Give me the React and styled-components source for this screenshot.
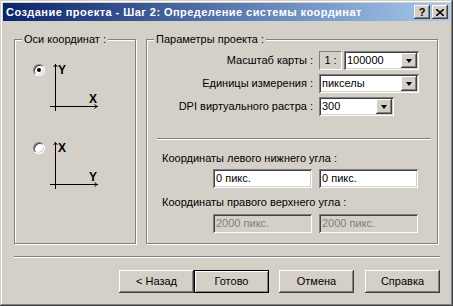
import React from 'react';
import styled, { createGlobalStyle } from 'styled-components';

const GlobalStyle = createGlobalStyle`
  html, body {
    margin: 0;
    padding: 0;
    background: #d4d0c8;
  }
  body {
    font-family: "Liberation Sans", Arial, sans-serif;
    font-size: 11px;
    line-height: 13px;
    color: #000;
  }
`;

const raised = `
  box-shadow: inset -1px -1px #404040, inset 1px 1px #fff,
    inset -2px -2px #808080, inset 2px 2px #d4d0c8;
`;

const sunken = `
  box-shadow: inset 1px 1px #808080, inset -1px -1px #fff,
    inset 2px 2px #404040, inset -2px -2px #d4d0c8;
`;

const Window = styled.div`
  width: 453px;
  height: 306px;
  box-sizing: border-box;
  padding: 3px;
  background: #d4d0c8;
  box-shadow: inset -1px -1px #404040, inset 1px 1px #d4d0c8,
    inset -2px -2px #808080, inset 2px 2px #fff;
  display: flex;
  flex-direction: column;
`;

const TitleBar = styled.div`
  height: 18px;
  display: flex;
  align-items: center;
  padding: 0 2px 0 3px;
  background: linear-gradient(to right, #0a246a, #a6caf0);
`;

const Title = styled.div`
  flex: 1;
  color: #fff;
  font-weight: bold;
  font-size: 11px;
  letter-spacing: 0.45px;
  white-space: nowrap;
`;

const CaptionButton = styled.div`
  width: 16px;
  height: 14px;
  margin-left: 2px;
  background: #d4d0c8;
  ${raised}
  display: flex;
  align-items: center;
  justify-content: center;
  font-weight: bold;
  font-size: 11px;
`;

const Body = styled.div`
  flex: 1;
  padding: 18px 0 0 11px;
  display: flex;
  flex-direction: column;
`;

const Groups = styled.div`
  display: flex;
  gap: 10px;
`;

const GroupBox = styled.div`
  position: relative;
  box-sizing: border-box;
  width: ${p => p.$w}px;
  height: 205px;
  border: 1px solid #808080;
  box-shadow: inset 1px 1px #fff, 1px 1px #fff;
  display: flex;
  flex-direction: column;
  padding: ${p => p.$pad};
`;

const Legend = styled.span`
  position: absolute;
  top: -7px;
  left: 7px;
  padding: 0 2px;
  background: #d4d0c8;
  white-space: nowrap;
`;

const AxisOption = styled.div`
  display: flex;
  align-items: flex-start;
  gap: 3px;
  height: 48px;
  & + & {
    margin-top: 30px;
  }
  svg {
    overflow: visible;
  }
`;

const Radio = styled.span`
  position: relative;
  width: 12px;
  height: 12px;
  box-sizing: border-box;
  border-radius: 50%;
  background: #fff;
  border: 1px solid;
  border-color: #808080 #fff #fff #808080;
  box-shadow: inset 1px 1px #404040, inset -1px -1px #d4d0c8;
  &::after {
    content: '';
    display: ${p => (p.$checked ? 'block' : 'none')};
    position: absolute;
    left: 3px;
    top: 3px;
    width: 4px;
    height: 4px;
    border-radius: 50%;
    background: #000;
  }
`;

const FormRow = styled.div`
  display: grid;
  grid-template-columns: 166px auto;
  column-gap: 6px;
  align-items: center;
  height: 19px;
  & + & {
    margin-top: 4px;
  }
`;

const FieldLabel = styled.span`
  text-align: right;
  white-space: nowrap;
`;

const Controls = styled.div`
  display: flex;
  gap: 2px;
`;

const ScaleBox = styled.div`
  width: 23px;
  height: 19px;
  box-sizing: border-box;
  border: 1px solid;
  border-color: #808080 #fff #fff #808080;
  display: flex;
  align-items: center;
  justify-content: center;
`;

const Combo = styled.div`
  width: ${p => p.$w}px;
  height: 19px;
  box-sizing: border-box;
  padding: 2px;
  background: #fff;
  ${sunken}
  display: flex;
  align-items: center;
`;

const ComboText = styled.span`
  flex: 1;
  padding-left: 1px;
`;

const DropButton = styled.span`
  width: 16px;
  height: 15px;
  background: #d4d0c8;
  ${raised}
  display: flex;
  align-items: center;
  justify-content: center;
  &::after {
    content: '';
    border-left: 3.5px solid transparent;
    border-right: 3.5px solid transparent;
    border-top: 4px solid #000;
  }
`;

const Etched = styled.div`
  height: 0;
  border-top: 1px solid #808080;
  border-bottom: 1px solid #fff;
  margin: ${p => p.$m};
  width: ${p => (p.$w ? `${p.$w}px` : 'auto')};
`;

const CoordLabel = styled.div`
  margin: ${p => p.$m};
  white-space: nowrap;
`;

const EditRow = styled.div`
  display: flex;
  gap: 7px;
  margin: ${p => p.$m};
`;

const Edit = styled.div`
  width: 99px;
  height: 19px;
  box-sizing: border-box;
  padding: 0 3px;
  background: ${p => (p.$disabled ? '#d4d0c8' : '#fff')};
  color: ${p => (p.$disabled ? '#808080' : '#000')};
  ${sunken}
  display: flex;
  align-items: center;
`;

const ButtonRow = styled.div`
  display: flex;
  margin: 12px 0 0 105px;
`;

const Button = styled.div`
  width: 75px;
  height: 23px;
  box-sizing: border-box;
  margin-left: ${p => p.$gap || 0}px;
  background: #d4d0c8;
  display: flex;
  align-items: center;
  justify-content: center;
  ${p =>
    p.$default
      ? 'box-shadow: inset 0 0 0 1px #000, inset 2px 2px #fff, inset -2px -2px #808080;'
      : raised}
`;

const AxisIcon = ({ top, right }) => (
  <svg width="52" height="48" viewBox="0 0 52 48">
    <g stroke="#000" strokeWidth="1" fill="none" shapeRendering="crispEdges">
      <line x1="7.5" y1="0" x2="7.5" y2="47" />
      <line x1="2" y1="42.5" x2="50" y2="42.5" />
    </g>
    <g stroke="#000" strokeWidth="1" fill="none">
      <polyline points="5.5,3 7.5,0.5 9.5,3" />
      <polyline points="46.5,40.5 49,42.5 46.5,44.5" />
    </g>
    <text x="10" y="9.5" fontFamily="Liberation Sans, Arial, sans-serif" fontWeight="bold" fontSize="12">
      {top}
    </text>
    <text x="41" y="38.5" fontFamily="Liberation Sans, Arial, sans-serif" fontWeight="bold" fontSize="12">
      {right}
    </text>
  </svg>
);

const CloseGlyph = () => (
  <svg width="8" height="7" viewBox="0 0 8 7">
    <path d="M0 0 L8 7 M8 0 L0 7" stroke="#000" strokeWidth="1.6" />
  </svg>
);

export default function App() {
  return (
    <>
      <GlobalStyle />
      <Window>
        <TitleBar>
          <Title>Создание проекта - Шаг 2: Определение системы координат</Title>
          <CaptionButton>?</CaptionButton>
          <CaptionButton>
            <CloseGlyph />
          </CaptionButton>
        </TitleBar>
        <Body>
          <Groups>
            <GroupBox $w={122} $pad="24px 0 0 18px">
              <Legend>Оси координат :</Legend>
              <AxisOption>
                <Radio $checked />
                <AxisIcon top="Y" right="X" />
              </AxisOption>
              <AxisOption>
                <Radio />
                <AxisIcon top="X" right="Y" />
              </AxisOption>
            </GroupBox>
            <GroupBox $w={292} $pad="11px 0 0 0">
              <Legend>Параметры проекта :</Legend>
              <FormRow>
                <FieldLabel>Масштаб карты :</FieldLabel>
                <Controls>
                  <ScaleBox>1 :</ScaleBox>
                  <Combo $w={75}>
                    <ComboText>100000</ComboText>
                    <DropButton />
                  </Combo>
                </Controls>
              </FormRow>
              <FormRow>
                <FieldLabel>Единицы измерения :</FieldLabel>
                <Controls>
                  <Combo $w={100}>
                    <ComboText>пикселы</ComboText>
                    <DropButton />
                  </Combo>
                </Controls>
              </FormRow>
              <FormRow>
                <FieldLabel>DPI виртуального растра :</FieldLabel>
                <Controls>
                  <Combo $w={75}>
                    <ComboText>300</ComboText>
                    <DropButton />
                  </Combo>
                </Controls>
              </FormRow>
              <Etched $m="22px 6px 0 10px" />
              <CoordLabel $m="12px 0 0 15px">Координаты левого нижнего угла :</CoordLabel>
              <EditRow $m="4px 0 0 66px">
                <Edit>0 пикс.</Edit>
                <Edit>0 пикс.</Edit>
              </EditRow>
              <CoordLabel $m="8px 0 0 15px">Координаты правого верхнего угла :</CoordLabel>
              <EditRow $m="5px 0 0 66px">
                <Edit $disabled>2000 пикс.</Edit>
                <Edit $disabled>2000 пикс.</Edit>
              </EditRow>
            </GroupBox>
          </Groups>
          <Etched $w={426} $m="12px 0 0 0" />
          <ButtonRow>
            <Button>&lt; Назад</Button>
            <Button $default>Готово</Button>
            <Button $gap={10}>Отмена</Button>
            <Button $gap={11}>Справка</Button>
          </ButtonRow>
        </Body>
      </Window>
    </>
  );
}
